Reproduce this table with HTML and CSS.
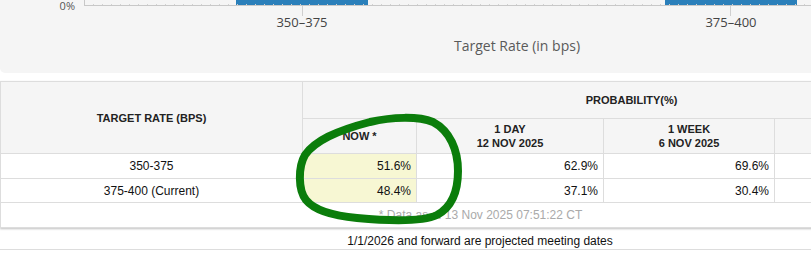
FILE: index.html
```html
<!DOCTYPE html>
<html>
<head>
<meta charset="utf-8">
<link rel="stylesheet" href="styles.css">
</head>
<body>
<div class="page">
  <div class="chart">
    <svg class="plot" width="960" height="31" viewBox="0 0 960 31">
      <rect x="236" y="0" width="132" height="5" fill="#2a7fba"/>
      <rect x="665" y="0" width="132" height="5" fill="#2a7fba"/>
      <line x1="84" y1="4.5" x2="950" y2="4.5" stroke="#d2d2d2" stroke-dasharray="1 8"/>
      <line x1="84.5" y1="0" x2="84.5" y2="6" stroke="#c8c8c8"/>
      <line x1="84" y1="5.5" x2="950" y2="5.5" stroke="#c8c8c8"/>
      <line x1="302.5" y1="6" x2="302.5" y2="16" stroke="#cfcfcf"/>
      <line x1="730.5" y1="6" x2="730.5" y2="16" stroke="#cfcfcf"/>
      <text class="ylab" x="75" y="9.5" text-anchor="end">0%</text>
      <text class="xlab" x="302" y="27" text-anchor="middle">350–375</text>
      <text class="xlab" x="731" y="27" text-anchor="middle">375–400</text>
    </svg>
    <div class="axis-title">Target Rate (in bps)</div>
  </div>

  <div class="tablewrap">
    <table class="prob">
      <colgroup>
        <col class="w-rate"><col class="w-now"><col class="w-day"><col class="w-week"><col class="w-month">
      </colgroup>
      <thead>
        <tr class="h1">
          <th rowspan="2">TARGET RATE (BPS)</th>
          <th colspan="4">PROBABILITY(%)</th>
        </tr>
        <tr class="h2">
          <th>NOW *</th>
          <th>1 DAY<br>12 NOV 2025</th>
          <th>1 WEEK<br>6 NOV 2025</th>
          <th></th>
        </tr>
      </thead>
      <tbody>
        <tr class="r1">
          <td class="rate">350-375</td>
          <td class="num now">51.6%</td>
          <td class="num">62.9%</td>
          <td class="num">69.6%</td>
          <td class="num"></td>
        </tr>
        <tr class="r2">
          <td class="rate">375-400 (Current)</td>
          <td class="num now">48.4%</td>
          <td class="num">37.1%</td>
          <td class="num">30.4%</td>
          <td class="num"></td>
        </tr>
        <tr class="foot">
          <td colspan="5">* Data as of 13 Nov 2025 07:51:22 CT</td>
        </tr>
      </tbody>
    </table>
  </div>

  <div class="note">1/1/2026 and forward are projected meeting dates</div>

  <p class="body-text">Markets are pricing a near coin flip for the December meeting, with the odds of a cut drifting lower this week.</p>

  <svg class="loop" width="180" height="125" viewBox="0 0 180 125">
    <path d="M15 50 C25 36 45 26 80 17 C102 12 128 11 143 17 C160 26 168 45 168 66 C168 86 162 102 147 110 C132 117 100 116 67 113 C45 111 25 106 16 95 C8 85 8 62 15 50 Z" fill="none" stroke="#0b7d0b" stroke-width="8" stroke-linecap="round" stroke-linejoin="round"/>
  </svg>
</div>
</body>
</html>
```

FILE: styles.css
```css
html, body {
  margin: 0;
  padding: 0;
  background: #ffffff;
}

.page {
  position: relative;
  width: 811px;
  height: 279px;
  overflow: hidden;
  font-family: "Liberation Sans", Arial, sans-serif;
  color: #111;
}

.chart {
  width: 960px;
  height: 73px;
  background: #f5f5f5;
  border-radius: 0 0 5px 5px;
  display: flex;
  flex-direction: column;
}

.plot {
  display: block;
}

.ylab {
  font-family: "Open Sans", sans-serif;
  font-size: 11px;
  fill: #555;
}

.xlab {
  font-family: "Open Sans", sans-serif;
  font-size: 13px;
  fill: #444;
}

.axis-title {
  margin: 5px 0 0 84px;
  width: 866px;
  text-align: center;
  font-family: "Open Sans", sans-serif;
  font-size: 14px;
  line-height: 20px;
  color: #5a5a5a;
}

.tablewrap {
  width: 960px;
  margin-top: 8px;
  box-shadow: 0 1px 2px rgba(0, 0, 0, 0.25);
}

.prob {
  width: 960px;
  table-layout: fixed;
  border-collapse: collapse;
  border: 1px solid #dddddd;
  font-size: 12px;
}

.w-rate { width: 302px; }
.w-now { width: 114px; }
.w-day { width: 187px; }
.w-week { width: 171px; }
.w-month { width: 186px; }

.prob th,
.prob td {
  border: 1px solid #dddddd;
  padding: 0 5px;
}

.prob th {
  background: #f5f5f5;
  font-size: 11px;
  font-weight: bold;
  line-height: 14px;
  color: #222;
  text-align: center;
  vertical-align: middle;
}

.h1 th { height: 36px; }
.h2 th { height: 34px; }

.prob td {
  color: #111;
  line-height: 14px;
}

.r1 td { height: 24px; }
.r2 td { height: 23px; }

.rate { text-align: center; }
.num { text-align: right; }
.now { background: #f7f7d3; }

.foot td {
  height: 24px;
  text-align: center;
  color: #aaaaaa;
  background: #fff;
}

.note {
  width: 960px;
  margin-top: 6px;
  text-align: center;
  font-size: 12px;
  line-height: 15px;
  color: #111;
}

.body-text {
  margin: 0;
  padding-top: 26px;
  border-top: 1px solid #dddddd;
  width: 811px;
  font-size: 16px;
  line-height: 20px;
  color: #333;
  white-space: nowrap;
  overflow: hidden;
}

.loop {
  position: absolute;
  left: 290px;
  top: 105px;
}
```
